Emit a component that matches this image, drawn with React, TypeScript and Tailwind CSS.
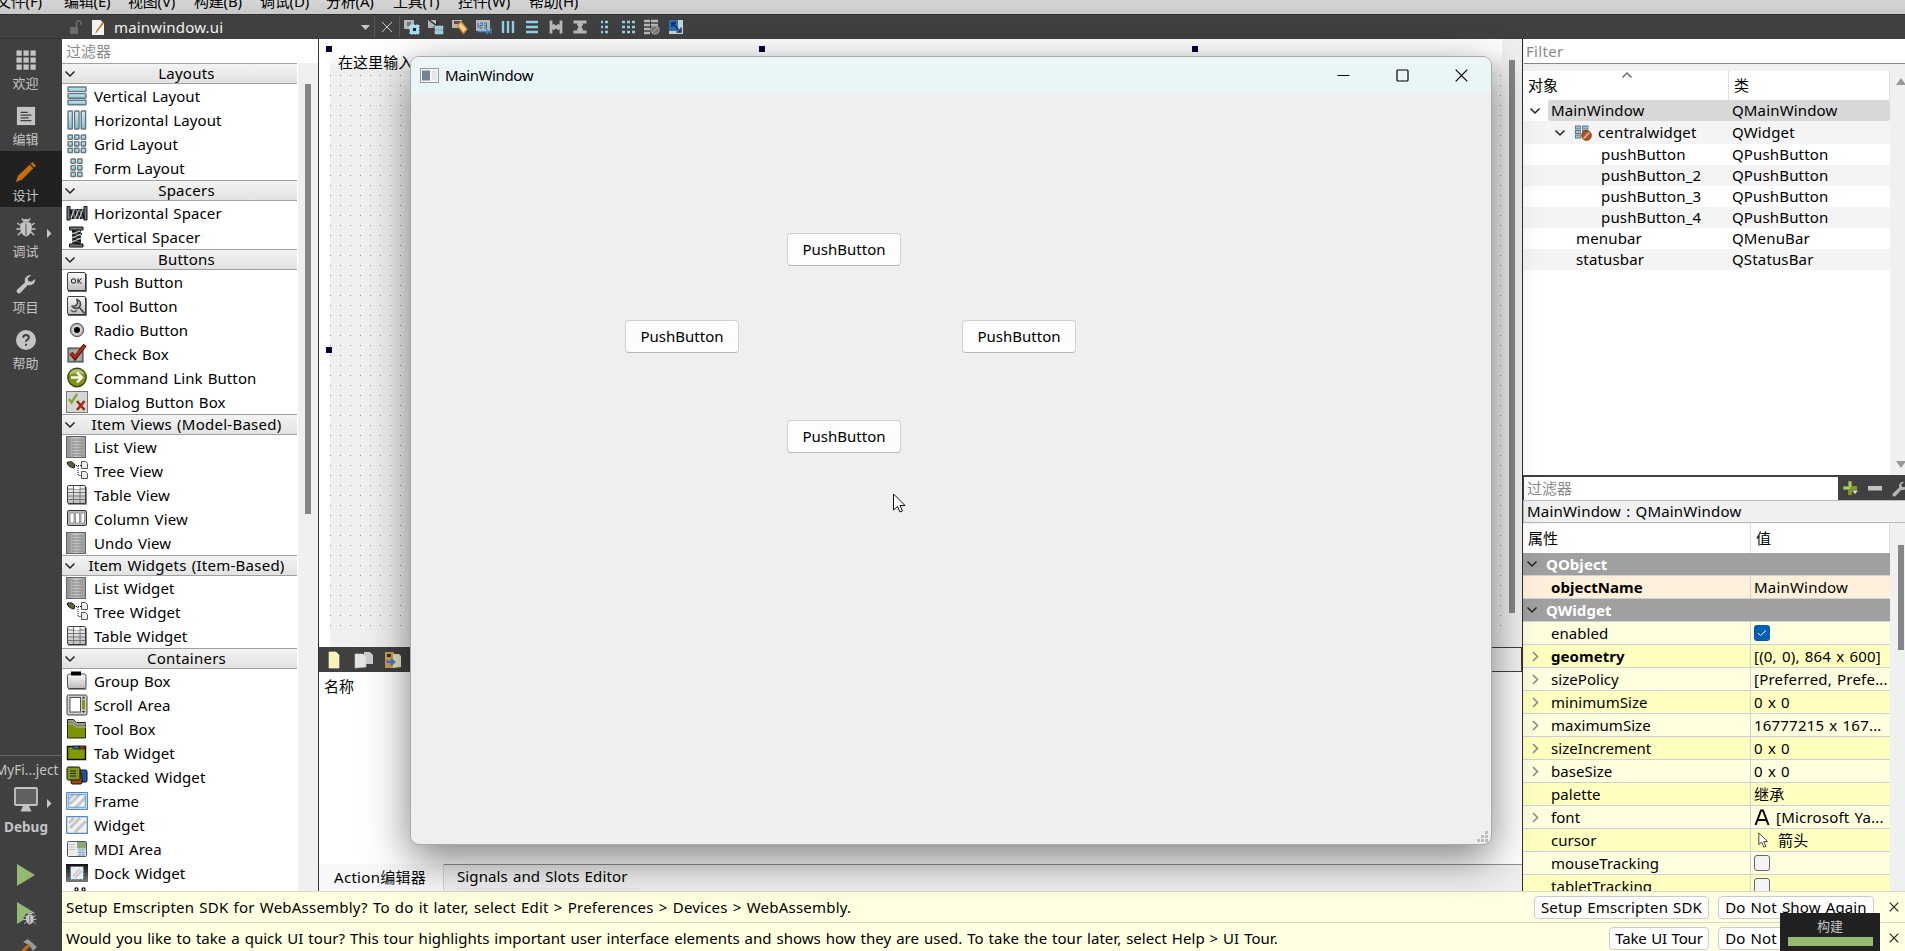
import React from "react";

type IconProps = { name: string };

const bars = (horizontal: boolean) => (
  <>
    {[0, 1, 2].map((i) =>
      horizontal ? (
        <rect key={i} x="2" y={2 + i * 6.6} width="18" height="4.6" rx=".6" fill="url(#aqua)" stroke="#6b757a" strokeWidth="1.4" />
      ) : (
        <rect key={i} x={2 + i * 6.6} y="2" width="4.4" height="18" rx=".6" fill="url(#aqua)" stroke="#6b757a" strokeWidth="1.4" />
      ),
    )}
  </>
);

const cells = (cols: number, off: number) =>
  Array.from({ length: cols * 3 }, (_, k) => {
    const c = k % cols;
    const r = Math.floor(k / cols);
    return (
      <rect key={k} x={off + c * 6.6} y={2 + r * 6.6} width="4.4" height="4.4" rx=".6" fill="url(#aqua)" stroke="#6b757a" strokeWidth="1.4" />
    );
  });

const frameBox = <rect x="1.5" y="1.5" width="18" height="18" rx="1.5" fill="url(#silver)" stroke="#444" />;

const stripes = <path d="M4 14 L14 4 M9 18 L20 7 M3 9 L8 4" stroke="#c6c6c6" strokeWidth="3" />;

const boxIcons: Record<string, React.ReactNode> = {
  vlayout: bars(true),
  hlayout: bars(false),
  grid: cells(3, 2),
  form: cells(2, 5),
  hspacer: (
    <>
      <rect x="4" y="7" width="14" height="10" fill="#555c60" />
      <path d="M1 4.500h3v13.500H1zM18 4.500h3v13.500h-3z" fill="#777" stroke="#111" />
      <path d="M4.500 8l2.500 9M8 7l3.500 10M11.500 7L15 17M15 7l3 9" stroke="#111" strokeWidth="1.600" />
      <path d="M5 16L8.500 7M9 17l3.500-9M13 17l3.500-9" stroke="#c8d0d4" strokeWidth="1.200" />
    </>
  ),
  vspacer: (
    <>
      <rect x="6" y="4" width="9" height="14" fill="#555c60" />
      <path d="M3.500 1h13.500v3H3.500zM3.500 18h13.500v3H3.500z" fill="#777" stroke="#111" />
      <path d="M6 5l10 3M6 8.500l9 3.500M6 12l9 3.500M6 15.500l8 2.500" stroke="#111" strokeWidth="1.600" />
      <path d="M6 8l8-3M6 12l9-4M6 16l9-4" stroke="#c8d0d4" strokeWidth="1.100" />
    </>
  ),
  push: (
    <>
      {frameBox}
      <path d="M2 20h18V3" stroke="#333" strokeWidth="1.4" fill="none" />
      <rect x="5.5" y="8" width="4" height="4" rx="1.2" fill="none" stroke="#111" />
      <path d="M12 7.5v5M15.5 7.5L12.5 10l3 2.5" stroke="#111" fill="none" />
    </>
  ),
  tool: (
    <>
      {frameBox}
      <path d="M2 20h18V3" stroke="#333" strokeWidth="1.4" fill="none" />
      <path d="M11 4.5a4.5 4.5 0 1 1-4.8 6.8l3.6-.5 1.8-2.3zM13 12l5.5 6.5" stroke="#444" strokeWidth="1.6" fill="#c8c8c8" />
      <path d="M5 15a3.5 3.5 0 0 0 6 0" stroke="#555" fill="none" strokeWidth="1.4" />
    </>
  ),
  radio: (
    <>
      <circle cx="11" cy="11" r="6.7" fill="#a9a9a9" stroke="#555" />
      <circle cx="11" cy="11" r="5" fill="#d4d4d4" />
      <circle cx="11" cy="11" r="3" fill="#000" />
    </>
  ),
  check: (
    <>
      <rect x="2" y="5" width="15" height="14" fill="#999" stroke="#333" />
      <rect x="4" y="7" width="11" height="10" fill="#aaa" />
      <path d="M5 10l4 5L19 2" stroke="#641204" strokeWidth="4" fill="none" />
      <path d="M5 10l4 4L18.5 3" stroke="#b03318" strokeWidth="2" fill="none" />
    </>
  ),
  command: (
    <>
      <circle cx="11" cy="10.5" r="9.2" fill="#7f9414" stroke="#3c450a" strokeWidth="1.400" />
      <path d="M3 8a8.4 8.4 0 0 1 16 0q-8-4-16 0" fill="#b2c170" />
      <path d="M5 10.5h10M11 5.5l5 5-5 5" stroke="#fff" strokeWidth="2.4" fill="none" />
    </>
  ),
  dialog: (
    <>
      <rect x=".5" y=".5" width="21" height="21" fill="#d6d6d6" stroke="#777" />
      <path d="M3 8l2.5 3.5L11 3" stroke="#7fae2a" strokeWidth="2.4" fill="none" />
      <path d="M11 10l7.5 9M18.5 10L11 19" stroke="#9b2d10" strokeWidth="2.6" />
    </>
  ),
  list: (
    <>
      <rect x=".5" y=".5" width="19" height="21" fill="url(#steel)" stroke="#666" />
      {[4, 7, 10, 13, 16, 19].map((y) => (
        <path key={y} d={`M3 ${y}h1.5M6 ${y}h11`} stroke="#848484" />
      ))}
    </>
  ),
  tree: (
    <>
      <path d="M1 2.500q5-2.500 8 2.500l-1 3Q2 7 1 2.500z" fill="#55663a" stroke="#1a1a1a" />
      <path d="M10 5.500h5M12 6v9.500h3" stroke="#111" strokeDasharray="1 1" fill="none" />
      <path d="M15.500 1.500h4l2 2v5h-6zM15.500 11.500h4l2 2v5h-6z" fill="#eee" stroke="#555" />
    </>
  ),
  table: (
    <>
      {frameBox}
      <path d="M2 20h18V3" stroke="#333" strokeWidth="1.2" fill="none" />
      <path d="M2 5h17M7.500 2v17M14 2v17M2 8.500h17M2 12h17M2 15.500h17" stroke="#6f7678" strokeWidth="1" />
      <rect x="8.500" y="2.500" width="5" height="2.500" fill="#fff" />
    </>
  ),
  column: (
    <>
      <rect x="1.500" y="2.500" width="19" height="15" rx="1.500" fill="#bbb" stroke="#333" />
      <path d="M4 5h4v10H4zM9.500 5h4v10h-4zM15 5h3.500v10H15z" fill="#fff" stroke="#666" strokeWidth=".6" />
    </>
  ),
  group: (
    <>
      <rect x="1.500" y="4" width="18.500" height="14.500" rx="2" fill="url(#silver)" stroke="#555" />
      <path d="M2 19h18.500" stroke="#333" />
      <rect x="5" y="1.500" width="10" height="4" fill="#000" />
    </>
  ),
  scroll: (
    <>
      <rect x="1" y="1" width="20" height="20" rx="1.500" fill="#ccc" stroke="#444" />
      <rect x="4" y="3.500" width="10.500" height="14.500" fill="#fff" stroke="#555" />
      <rect x="16" y="6" width="3" height="9.500" fill="#86960f" />
      <path d="M16 4.500l1.500-2 1.500 2zM16 17l1.500 2 1.500-2z" fill="#111" />
    </>
  ),
  toolbox: (
    <>
      <path d="M1.500 1.500h6l3 3h9V20h-18z" fill="#7c9400" stroke="#222" />
      <path d="M2 3h5l4 3h8.500M2 6h5l4 3h8.500" stroke="#999" strokeWidth="1.800" fill="none" />
    </>
  ),
  tab: (
    <>
      <path d="M1.500 4.500h18v13h-18z" fill="#7f9b00" stroke="#111" strokeWidth="1.500" />
      <rect x="7" y="4" width="6" height="3" fill="#2c68b0" stroke="#111" strokeWidth=".6" />
      <rect x="13.500" y="4" width="5.500" height="3" fill="#9c3410" stroke="#111" strokeWidth=".6" />
    </>
  ),
  stacked: (
    <>
      <rect x="10" y="4" width="11" height="12" rx="1.500" fill="#1d57a0" stroke="#111" />
      <rect x="5" y="7" width="11" height="11" rx="1.500" fill="#a0480f" stroke="#111" />
      <rect x="1" y="1" width="13" height="13" rx="1.500" fill="#84961a" stroke="#111" />
      <path d="M4 5h6M4 7.500h6M4 10h6" stroke="#222" />
    </>
  ),
  frame: (
    <>
      <rect x=".7" y="2.700" width="20.600" height="16.600" fill="#f2f2f2" stroke="#2c6fae" />
      {stripes}
      <rect x="2.700" y="4.700" width="16.600" height="12.600" fill="none" stroke="#5ba0d8" strokeWidth="1" />
    </>
  ),
  widget: (
    <>
      <rect x=".7" y="2.700" width="20.600" height="16.600" fill="#f0f0f0" />
      {stripes}
      <rect x=".7" y="2.700" width="20.600" height="16.600" fill="none" stroke="#2c6fae" />
    </>
  ),
  mdi: (
    <>
      <rect x="1.500" y="3.500" width="19" height="15" rx="1" fill="#eee" stroke="#555" />
      <rect x="11" y="4" width="9" height="6.500" fill="#88a878" />
      <path d="M3 6.500h6M3 9h6M3 11.500h6" stroke="#bbb" />
      <path d="M11.500 12h8M11.500 14.500h8M11.500 17h8M14 11.500v6.500M17 11.500v6.500" stroke="#7aa9d0" />
    </>
  ),
  dock: (
    <>
      <rect x="0" y="2" width="22" height="18" fill="url(#dark)" />
      <rect x="4.500" y="4.500" width="13" height="13" fill="#eee" stroke="#3474b0" strokeDasharray="2 1.500" />
      <path d="M7 14l7-7M9 16l7-7" stroke="#ccc" strokeWidth="2" />
    </>
  ),
  glasses: (
    <path d="M9 3.500a1.500 1.700 0 1 0 3 0 1.500 1.700 0 1 0-3 0M16 3.500a1.500 1.700 0 1 0 3 0 1.500 1.700 0 1 0-3 0" fill="none" stroke="#111" strokeWidth="1.300" />
  ),
};

function BoxIcon({ name }: IconProps) {
  return (
    <svg width="22" height="22" viewBox="0 0 22 22" className="shrink-0">
      {boxIcons[name]}
    </svg>
  );
}

const C = "#8fd3e8";
const G = "#b9b9b9";
const toolIcons: React.ReactNode[] = [
  <><rect x="0" y="1" width="10" height="9" fill={G} /><rect x="3" y="3" width="4" height="4" fill="#777" /><rect x="6" y="6" width="9" height="9" fill="#9fe0f0" stroke="#cdeef6" strokeWidth=".8" strokeDasharray="2 1" /><rect x="9" y="9" width="3" height="3" fill="#223" /></>,
  <><rect x="0" y="1" width="8" height="8" fill={G} /><path d="M1 1l8 6M9 3v5H5" stroke="#222" strokeWidth="1.200" fill="none" /><path d="M7 7h8v3.500H7zM7 11.500h8V15H7z" fill={C} stroke="#ddd" strokeWidth=".5" /></>,
  <><rect x="0" y="1" width="10" height="8" fill={G} /><path d="M2 2h7v3H2z" fill="#555" /><path d="M5.500 6.500l3.500-3.500 6 7-3.500 4.500z" fill="#f3d3a8" stroke="#e08a1e" strokeWidth="1.300" /></>,
  <><rect x="0" y="1" width="14" height="11" fill={G} /><path d="M2 4v5M4 4h2.500v2.500H4V9h2.500M8 4h2.500v5H8M8 6.500h2.500" stroke="#2a6eb5" fill="none" /><path d="M2 12.500h10M10 10l3 2.500-3 2.500M15 9v6" stroke="#3f8ed8" strokeWidth="1.300" fill="none" /></>,
  <path d="M3 2v12M8 2v12M13 2v12" stroke={C} strokeWidth="2.400" />,
  <path d="M2 3h12M2 8h12M2 13h12" stroke={C} strokeWidth="2.400" />,
  <path d="M3 1.500v13M13 1.500v13M5 8h6M6.500 5.500L5 8l1.500 2.500M9.500 5.500L11 8l-1.500 2.500" stroke={G} strokeWidth="2.800" fill="none" />,
  <path d="M1.500 3h13M1.500 13h13M8 5v6M5.500 6.500L8 5l2.500 1.500M5.500 9.500L8 11l2.500-1.500" stroke={G} strokeWidth="2.800" fill="none" />,
  <path d="M5 3h2M9 3h3M5 8h2M9 8h3M5 13h2M9 13h3" stroke={C} strokeWidth="2.600" />,
  <path d="M2 3h3M7 3h3M12 3h3M2 8h3M7 8h3M12 8h3M2 13h3M7 13h3M12 13h3" stroke={C} strokeWidth="2.600" />,
  <><path d="M0 2h6M7 2h7M0 6h6M7 6h7M0 10h6M0 14h6" stroke={G} strokeWidth="2.600" /><circle cx="11" cy="11" r="4.200" fill="#777" stroke="#aaa" /><path d="M8 14l6-6" stroke="#bbb" /></>,
  <><rect x="1" y="1" width="14" height="14" fill="#c9d3dc" /><rect x="1" y="1" width="9" height="11" fill="#2a6fb8" /><path d="M4 8V4h4M4 4l8 8M13 8.500V13H8.500" stroke="#0e2e57" strokeWidth="1.400" fill="none" /></>,
];

type Section = { title: string; items: [string, string][] };
const sections: Section[] = [
  { title: "Layouts", items: [["vlayout", "Vertical Layout"], ["hlayout", "Horizontal Layout"], ["grid", "Grid Layout"], ["form", "Form Layout"]] },
  { title: "Spacers", items: [["hspacer", "Horizontal Spacer"], ["vspacer", "Vertical Spacer"]] },
  {
    title: "Buttons",
    items: [["push", "Push Button"], ["tool", "Tool Button"], ["radio", "Radio Button"], ["check", "Check Box"], ["command", "Command Link Button"], ["dialog", "Dialog Button Box"]],
  },
  {
    title: "Item Views (Model-Based)",
    items: [["list", "List View"], ["tree", "Tree View"], ["table", "Table View"], ["column", "Column View"], ["list", "Undo View"]],
  },
  { title: "Item Widgets (Item-Based)", items: [["list", "List Widget"], ["tree", "Tree Widget"], ["table", "Table Widget"]] },
  {
    title: "Containers",
    items: [
      ["group", "Group Box"], ["scroll", "Scroll Area"], ["toolbox", "Tool Box"], ["tab", "Tab Widget"], ["stacked", "Stacked Widget"],
      ["frame", "Frame"], ["widget", "Widget"], ["mdi", "MDI Area"], ["dock", "Dock Widget"], ["glasses", ""],
    ],
  },
];

function Chevron({ className = "", color = "#222" }: { className?: string; color?: string }) {
  return (
    <svg width="12" height="8" viewBox="0 0 12 8" className={className}>
      <path d="M1.500 1.500L6 6l4.500-4.500" fill="none" stroke={color} strokeWidth="1.500" />
    </svg>
  );
}

function Arrow({ className = "" }: { className?: string }) {
  return (
    <svg width="5" height="9" viewBox="0 0 5 9" className={className}>
      <path d="M0 0l4.500 4.500L0 9z" fill="#c8c8c8" />
    </svg>
  );
}

const bug = (
  <>
    <path d="M7.500 4a3.500 3 0 0 1 7 0z" fill="#c4c4c4" />
    <path d="M5.500 5.500q5.500-2 11 0 1.500 4 .500 8.500-1 4.500-6 6.500-5-2-6-6.500-1-4.500.500-8.500z" fill="#c4c4c4" />
    <path d="M11 6v13" stroke="#404040" strokeWidth="1" />
    <path d="M5 8L1.500 5.500M17 8l3.500-2.500M5 12H.5M17 12h4.500M5.500 15.500L2 19M16.500 15.500L20 19M8.500 3L6.500.500M13.500 3l2-2.500" stroke="#c4c4c4" strokeWidth="1.600" />
  </>
);

const wrench = "M15.500 1a6 6 0 0 0-5.500 8L1.500 17a2.300 2.300 0 0 0 3.500 3.500L13 12a6 6 0 0 0 8-6.500l-4 3-3.500-.700-.700-3 4-3.300z";

const modes: { label: string; icon: React.ReactNode; active?: boolean; arrow?: boolean }[] = [
  {
    label: "欢迎",
    icon: [0, 1, 2].map((r) => [0, 1, 2].map((c) => <rect key={`${r}${c}`} x={0.5 + c * 7.700} y={0.5 + r * 7.700} width="5.800" height="5.800" fill="#c4c4c4" />)),
  },
  { label: "编辑", icon: <><rect x="1" y="1" width="20" height="20" fill="#c4c4c4" /><path d="M5 7h8M5 10h12M5 13h9M5 16h12" stroke="#404040" strokeWidth="1.300" /></> },
  { label: "设计", active: true, icon: <path d="M0 22l2-6.500L15 3l4 4L6.500 19.500zM16 2l2-2 4 4-2 2z" fill="#c86e0a" /> },
  { label: "调试", arrow: true, icon: bug },
  { label: "项目", icon: <path d={wrench} fill="#c4c4c4" /> },
  { label: "帮助", icon: <><circle cx="11" cy="11" r="11" fill="#c4c4c4" /><path d="M7.800 8.500q.2-3 3.200-3t3.200 2.700c0 2.300-3.200 2.300-3.200 4.800M11 15v2.300" stroke="#404040" strokeWidth="2.200" fill="none" /></> },
];

const menus = [
  ["文件(F)", "w-[68px]"], ["编辑(E)", "w-16"], ["视图(V)", "w-[66px]"], ["构建(B)", "w-[66px]"], ["调试(D)", "w-[66px]"],
  ["分析(A)", "w-[67px]"], ["工具(T)", "w-[65px]"], ["控件(W)", "w-[71px]"], ["帮助(H)", "w-[70px]"],
];

const objects = [
  ["MainWindow", "QMainWindow"], ["centralwidget", "QWidget"], ["pushButton", "QPushButton"], ["pushButton_2", "QPushButton"],
  ["pushButton_3", "QPushButton"], ["pushButton_4", "QPushButton"], ["menubar", "QMenuBar"], ["statusbar", "QStatusBar"],
];
const objectIndent = ["pl-7", "pl-[75px]", "pl-[78px]", "pl-[78px]", "pl-[78px]", "pl-[78px]", "pl-[53px]", "pl-[53px]"];

type Prop = { name: string; value?: React.ReactNode; kind?: "group" | "peach"; bold?: boolean; open?: boolean; dark?: boolean };

const emptyBox = <span className="block size-4 rounded-[3px] border border-[#666] bg-[#f4f4f4]" />;

const props: Prop[] = [
  { name: "QObject", kind: "group" },
  { name: "objectName", value: "MainWindow", kind: "peach", bold: true },
  { name: "QWidget", kind: "group" },
  {
    name: "enabled",
    value: (
      <span className="flex size-4 items-center justify-center rounded-[3px] bg-[#005fb0]">
        <svg width="10" height="8" viewBox="0 0 10 8"><path d="M1 4l2.500 2.500L9 1.500" stroke="#fff" fill="none" /></svg>
      </span>
    ),
  },
  { name: "geometry", value: "[(0, 0), 864 x 600]", bold: true, open: true, dark: true },
  { name: "sizePolicy", value: "[Preferred, Prefe...", open: true },
  { name: "minimumSize", value: "0 x 0", open: true, dark: true },
  { name: "maximumSize", value: "16777215 x 167...", open: true },
  { name: "sizeIncrement", value: "0 x 0", open: true, dark: true },
  { name: "baseSize", value: "0 x 0", open: true },
  { name: "palette", value: "继承", dark: true },
  {
    name: "font", open: true,
    value: <><svg width="16" height="17" viewBox="0 0 16 17" className="mr-[6px]"><path d="M1.500 16L7 1.500h2L14.500 16M4 11h8" stroke="#000" strokeWidth="2" fill="none" /></svg>[Microsoft Ya...</>,
  },
  {
    name: "cursor", dark: true,
    value: <><svg width="10" height="16" viewBox="0 0 12 19" className="mr-2.5 ml-1"><path d="M1 1v14l3.500-3 2.500 6 2.500-1L7 11.500h4.500z" fill="#fff" stroke="#222" /></svg>箭头</>,
  },
  { name: "mouseTracking", value: emptyBox },
  { name: "tabletTracking", value: emptyBox, dark: true },
];

function PropRow({ p }: { p: Prop }) {
  if (p.kind === "group") {
    return (
      <div className="flex h-[23px] items-center border-b border-[#d0d0d8] bg-[#a0a0a0] pl-[3px] font-bold text-white">
        <Chevron className="mr-2" />
        {p.name}
      </div>
    );
  }
  const bg = p.kind === "peach" ? "bg-[#fff0dc]" : p.dark ? "bg-[#ffffbf]" : "bg-[#ffffdf]";
  return (
    <div className={`flex h-[23px] border-b border-[#d0d0d8] ${bg}`}>
      <div className="flex w-[228px] items-center border-r border-[#d0d0d8]">
        <span className="flex w-7 pl-[9px]">
          {p.open && (
            <svg width="7" height="11" viewBox="0 0 7 11"><path d="M1 1l4.500 4.500L1 10" fill="none" stroke="#888" strokeWidth="1.500" /></svg>
          )}
        </span>
        <span className={p.bold ? "font-bold" : ""}>{p.name}</span>
      </div>
      <div className="flex min-w-0 flex-1 items-center pl-[3px] tracking-[0.2px] whitespace-nowrap">{p.value}</div>
    </div>
  );
}

function MenuBar() {
  return (
    <div className="h-3.5 shrink-0 overflow-hidden bg-linear-to-b from-[#d6d6d6] to-[#c8c8c8]">
      <div className="-mt-[11px] -ml-1 flex h-6 items-center tracking-[-0.2px]">
        {menus.map(([m, w]) => <span key={m} className={`${w} shrink-0`}>{m}</span>)}
      </div>
    </div>
  );
}

function EditorBar() {
  return (
    <div className="flex h-[25px] shrink-0 items-center border-t border-[#2e2e2e] bg-[#404040]">
      <div className="h-full w-[61px] border-b border-[#333]" />
      <svg width="14" height="16" viewBox="0 0 14 16" className="ml-2">
        <rect x="1" y="8" width="8" height="7" fill="#6b6b6b" />
        <path d="M7.500 8V4a2 2 0 0 1 4.500 0v2" stroke="#6b6b6b" strokeWidth="1.500" fill="none" />
      </svg>
      <svg width="15" height="17" viewBox="0 0 15 17" className="ml-2">
        <path d="M1 1h8.500L13 4.500V16H1z" fill="#f2f2f2" />
        <path d="M13 4L6 13l-1.500 2 .500-3L11.500 3z" fill="#c9741a" />
      </svg>
      <span className="ml-2 w-[247px] tracking-[0.18px] text-[#f0f0f0]">mainwindow.ui</span>
      <svg width="9" height="5" viewBox="0 0 9 5"><path d="M0 0h9L4.500 5z" fill="#c8c8c8" /></svg>
      <div className="ml-1 h-5 w-px bg-[#5c5c5c]" />
      <svg width="12" height="12" viewBox="0 0 12 12" className="ml-1.5"><path d="M1 1l10 10M11 1L1 11" stroke="#ccc" /></svg>
      <div className="ml-1.5 h-5 w-px bg-[#5c5c5c]" />
      <div className="ml-1 flex gap-2">
        {toolIcons.map((ic, i) => <svg key={i} width="16" height="16" viewBox="0 0 16 16">{ic}</svg>)}
      </div>
    </div>
  );
}

function Sidebar() {
  return (
    <div className="flex w-[62px] shrink-0 flex-col overflow-hidden bg-[#404040] text-[#c4c4c4]">
      {modes.map((m) => (
        <div key={m.label} className={`relative flex h-14 w-full shrink-0 flex-col items-center pt-[11px] pr-[11px] text-[13px] ${m.active ? "bg-[#212121]" : ""}`}>
          <svg width="20" height="20" viewBox="0 0 22 22">{m.icon}</svg>
          <span className="mt-[3px] leading-5">{m.label}</span>
          {m.arrow && <Arrow className="absolute top-[22px] left-[47px]" />}
        </div>
      ))}
      <div className="mt-auto mb-0 flex h-[196px] shrink-0 flex-col border-t border-[#666]">
        <span className="mt-1 -ml-[5px] text-[13.5px] leading-5 whitespace-nowrap">MyFi...ject</span>
        <div className="mt-[7px] ml-3.5 flex items-end">
          <svg width="24" height="25" viewBox="0 0 24 25">
            <rect x="1" y="1" width="22" height="17" rx="1" fill="#606060" stroke="#c4c4c4" strokeWidth="1.800" />
            <path d="M9 19h6l2.500 5.500h-11z" fill="#c4c4c4" />
          </svg>
          <Arrow className="mb-1 ml-[9px]" />
        </div>
        <span className="mt-[5px] ml-1 text-[13.5px] leading-5 font-bold">Debug</span>
        <svg width="18" height="22" viewBox="0 0 18 22" className="mt-[27px] ml-[17px] shrink-0"><path d="M0 0l18 11L0 22z" fill="#93ba70" /></svg>
        <svg width="22" height="26" viewBox="0 0 22 26" className="mt-4 ml-[17px] shrink-0">
          <path d="M0 0l18 11L0 22z" fill="#93ba70" />
          <g transform="translate(6 10) scale(.62)"><circle cx="11" cy="11" r="10" fill="#404040" />{bug}</g>
        </svg>
        <svg width="22" height="20" viewBox="0 0 22 20" className="mt-[11px] ml-[17px] shrink-0">
          <path d="M6 3l5-3 9 8-4 4-4-6z" fill="#9a9a9a" />
          <path d="M12 6L1 17" stroke="#c86e0a" strokeWidth="3" />
        </svg>
      </div>
    </div>
  );
}

function WidgetBox() {
  return (
    <div className="flex w-64 shrink-0 flex-col overflow-hidden bg-white">
      <div className="flex h-6 shrink-0 items-center bg-white pl-1 text-[#8a8a8a]">过滤器</div>
      <div className="flex min-h-0 flex-1">
        <div className="w-[235px]">
          {sections.map((s) => (
            <div key={s.title}>
              <div className="flex h-[21px] items-center border-y border-[#a0a0a0] bg-linear-to-b from-[#f3f3f3] to-[#e2e2e2] pl-0.5">
                <Chevron />
                <span className="flex-1 text-center leading-none tracking-[0.25px] whitespace-nowrap">{s.title}</span>
              </div>
              {s.items.map(([icon, label], i) => (
                <div key={i} className="flex h-6 items-center gap-1.5 pl-1 tracking-[0.1px] text-black">
                  <BoxIcon name={icon} />
                  <span className="leading-6">{label}</span>
                </div>
              ))}
            </div>
          ))}
        </div>
        <div className="ml-px flex-1 bg-[#f0f0f0] pt-[21px] pl-[7px]">
          <div className="h-[430px] w-1.5 bg-[#858585]" />
        </div>
      </div>
    </div>
  );
}

function PushButton({ className }: { className: string }) {
  return (
    <button className={`absolute flex h-[33px] w-[114px] items-center justify-center rounded-[4px] border border-[#d0d0d0] border-b-[#b8b8b8] bg-[#fdfdfd] tracking-[0px] ${className}`}>
      PushButton
    </button>
  );
}

function PreviewWindow() {
  return (
    <div className="absolute top-[56px] left-[410px] flex h-[789px] w-[1082px] flex-col overflow-hidden rounded-[9px] border border-[#a9a9a9] bg-[#efefef] shadow-[0_14px_44px_rgba(0,0,0,0.5)]">
      <div className="flex h-[37px] shrink-0 items-center bg-[#eaf5f8] pl-[9px]">
        <svg width="19" height="15" viewBox="0 0 19 15">
          <rect x=".5" y=".5" width="18" height="14" fill="#f4f4f4" stroke="#999" />
          <rect x="2" y="2.500" width="8" height="10" fill="#6f8494" />
          <rect x="12" y="2.500" width="4.500" height="10" fill="#e2e6ea" />
        </svg>
        <span className="ml-[6px] flex-1 tracking-[-0.4px]">MainWindow</span>
        <div className="mr-[23px] flex gap-[46px]">
          <svg width="13" height="13" viewBox="0 0 13 13"><path d="M.5 6.500h12" stroke="#000" /></svg>
          <svg width="13" height="13" viewBox="0 0 13 13"><rect x="1" y="1" width="11" height="11" rx="1" fill="none" stroke="#000" strokeWidth="1.200" /></svg>
          <svg width="13" height="13" viewBox="0 0 13 13"><path d="M.7.700l11.600 11.600M12.300.700L.700 12.300" stroke="#000" strokeWidth="1.200" /></svg>
        </div>
      </div>
      <div className="relative flex-1">
        <PushButton className="top-[139px] left-[376px]" />
        <PushButton className="top-[226px] left-[214px]" />
        <PushButton className="top-[226px] left-[551px]" />
        <PushButton className="top-[326px] left-[376px]" />
        <svg width="13" height="20" viewBox="0 0 13 20" className="absolute top-[399px] left-[482px]">
          <path d="M.5 1v16l4-3.500 2.500 5.500 2.500-1-2.500-5.500h5z" fill="#fff" stroke="#111" />
        </svg>
        <svg width="12" height="12" viewBox="0 0 12 12" className="absolute right-[2px] bottom-[2px]">
          <path d="M8 1h3v3H8zM4 5h3v3H4zM8 5h3v3H8zM0 9h3v3H0zM4 9h3v3H4zM8 9h3v3H8z" fill="#bdbdbd" />
        </svg>
      </div>
    </div>
  );
}

function Handle({ className }: { className: string }) {
  return <div className={`absolute size-1.5 border border-[#00007f] bg-black ${className}`} />;
}

function Workspace() {
  return (
    <div className="flex w-[1204px] shrink-0 flex-col border-l border-[#333] bg-[#f0f0f0]">
      <div className="flex h-[608px] shrink-0">
        <div className="relative w-[1183px] bg-white pt-3 pl-[11px]">
          <div className="flex h-full flex-col">
            <div className="flex h-[23px] items-center bg-linear-to-b from-white to-[#ececec] pl-2">在这里输入</div>
            <svg width="1172" height="574" className="block bg-[#f0f0f0]">
              <defs>
                <pattern id="dots" width="10" height="10" patternUnits="userSpaceOnUse"><rect y="1" width="1" height="1" fill="#8c8c8c" /></pattern>
              </defs>
              <rect width="1172" height="554" fill="url(#dots)" />
            </svg>
          </div>
          <Handle className="top-[7px] left-[7px]" />
          <Handle className="top-[7px] left-[440px]" />
          <Handle className="top-[7px] left-[873px]" />
          <Handle className="top-[308px] left-[7px]" />
        </div>
        <div className="flex-1 pt-[21px] pl-[7px]"><div className="h-[553px] w-1.5 bg-[#858585]" /></div>
      </div>
      <div className="flex h-[25px] shrink-0 items-center bg-[#404040] pl-[9px]">
        <svg width="12" height="18" viewBox="0 0 12 18"><path d="M1 1h7l3 3v13H1z" fill="#fdf0b0" stroke="#fff" strokeWidth=".6" /></svg>
        <svg width="20" height="18" viewBox="0 0 20 18" className="ml-3.5"><path d="M10 1h6l3 3v9h-9z" fill="#ccc" /><path d="M1 3h8l3 3v10L1 17z" fill="#e4e4e4" stroke="#ccc" strokeWidth=".6" /></svg>
        <svg width="18" height="18" viewBox="0 0 18 18" className="ml-2.5"><rect x="1" y="1" width="9" height="16" fill="#d09a4c" /><path d="M9 3h6l2 2v11l-8 1z" fill="#e8e4c0" /><path d="M2 9l5 1V7l5 4-5 4v-3H3z" fill="#2f7fd0" /><path d="M3 3h4v3H3z" fill="#333" /></svg>
        <div className="mr-px ml-auto h-[23px] w-12 bg-[#f4f4f4]" />
      </div>
      <div className="h-[192px] shrink-0 bg-white pt-1 pl-[5px]">名称</div>
      <div className="flex flex-1">
        <div className="flex w-[125px] items-center border-r border-[#d4d4d4] bg-[#f8f8f8] pl-[15px] tracking-[0.3px] whitespace-nowrap">Action编辑器</div>
        <div className="flex-1 border-t border-[#8f8f8f] pl-[13px]">
          <span className="inline-block h-6 w-[183px] border-b border-[#e4e4e4] leading-[23px] tracking-[0.12px] whitespace-nowrap">Signals and Slots Editor</span>
        </div>
      </div>
    </div>
  );
}

function RightPanel() {
  return (
    <div className="flex min-w-0 flex-1 flex-col overflow-hidden border-l border-[#2e2e2e] bg-[#f0f0f0]">
      <div className="ml-px flex h-[25px] shrink-0 items-center border-b border-[#888] bg-white pl-0.5 tracking-[0.3px] text-[#8a8a8a]">Filter</div>
      <div className="mt-[7px] flex h-[404px] shrink-0">
        <div className="w-[367px] bg-white">
          <div className="flex h-[29px]">
            <div className="relative flex w-[206px] items-center border-r border-[#ddd] pl-[5px]">
              对象
              <Chevron className="absolute top-0 left-[98px] rotate-180" color="#666" />
            </div>
            <div className="flex w-[161px] items-center border-r border-[#ddd] pl-[5px]">类</div>
          </div>
          {objects.map(([n, c], i) => (
            <div key={n} className={`relative flex items-center tracking-[0.15px] ${i === 1 ? "h-[23px]" : "h-[21px]"} ${i % 2 ? "bg-[#f4f4f4]" : "bg-white"}`}>
              {i === 0 && <div className="absolute inset-y-0 right-0 left-[25px] rounded-xs bg-[#d8d8d8]" />}
              {i === 0 && <Chevron className="absolute left-[6px]" />}
              {i === 1 && <Chevron className="absolute left-[31px]" />}
              {i === 1 && (
                <svg width="17" height="16" viewBox="0 0 17 16" className="absolute left-[52px]">
                  <path d="M0 2.500h6M7 2.500h6.500M0 7h6M7 7h6.500M0 11.500h6" stroke="#5f7480" strokeWidth="4" />
                  <path d="M1 2.500h4.500M8 2.500h5M1 7h4.500M8 7h5M1 11.500h4.500" stroke="#93c4d8" strokeWidth="2" />
                  <circle cx="11.500" cy="10.500" r="4.800" fill="#b5561c" stroke="#7a3510" />
                  <path d="M8.500 13.500l6-6" stroke="#ccc" strokeWidth="1.300" />
                </svg>
              )}
              <span className={`relative w-[209px] ${objectIndent[i]}`}>{n}</span>
              <span className="relative">{c}</span>
            </div>
          ))}
        </div>
        <div className="ml-px flex flex-1 flex-col justify-between pt-[7px] pb-[7px] pl-[5px]">
          <svg width="10" height="7" viewBox="0 0 10 7"><path d="M5 0l5 7H0z" fill="#999" /></svg>
          <svg width="10" height="7" viewBox="0 0 10 7"><path d="M5 7l5-7H0z" fill="#999" /></svg>
        </div>
      </div>
      <div className="flex h-[25px] shrink-0 bg-[#404040] pt-0.5 pl-px">
        <div className="flex w-[314px] shrink-0 items-center bg-white pl-[3px] text-[#8a8a8a]">过滤器</div>
        <div className="flex items-center gap-2.5 pl-[5px]">
          <svg width="15" height="15" viewBox="0 0 15 15" className="shrink-0"><path d="M7 0v14M0 7h14" stroke="#7a9c1c" strokeWidth="4" /><path d="M7 1v5M1 7h6" stroke="#a9c49a" strokeWidth="2" /><path d="M9 9.500h6l-3 3.500z" fill="#ddd" /></svg>
          <svg width="14" height="5" viewBox="0 0 14 5" className="shrink-0"><rect width="14" height="4.500" fill="#c4c4c4" /></svg>
          <svg width="16" height="16" viewBox="0 0 22 22" className="shrink-0"><path d={wrench} fill="#b4b4b4" /></svg>
        </div>
      </div>
      <div className="flex h-[23px] shrink-0 items-center border border-r-0 border-[#bbb] bg-[#f0f0f0] pl-[3px] tracking-[0.2px]">MainWindow : QMainWindow</div>
      <div className="flex min-h-0 flex-1 pt-px">
        <div className="w-[367px]">
          <div className="flex h-[29px] bg-white">
            <div className="flex w-[228px] items-center border-r border-[#ddd] pl-[5px]">属性</div>
            <div className="flex flex-1 items-center border-r border-[#ddd] pl-[5px]">值</div>
          </div>
          {props.map((p) => <PropRow key={p.name} p={p} />)}
        </div>
        <div className="flex-1 pt-[21px] pl-2"><div className="h-[105px] w-1.5 bg-[#858585]" /></div>
      </div>
    </div>
  );
}

function InfoButton({ children, className }: { children: React.ReactNode; className: string }) {
  return (
    <div className={`flex h-[23px] shrink-0 items-center justify-center rounded-[4px] border border-[#ccc] bg-[#fdfdfd] whitespace-nowrap ${className}`}>{children}</div>
  );
}

function CloseX() {
  return <svg width="10" height="10" viewBox="0 0 10 10" className="mr-[6px] ml-[15px] shrink-0"><path d="M.7.700l8.600 8.600M9.300.700L.700 9.300" stroke="#222" strokeWidth="1.200" /></svg>;
}

function InfoBars() {
  return (
    <div className="flex h-[60px] shrink-0 flex-col overflow-hidden whitespace-nowrap">
      <div className="flex h-[31px] shrink-0 items-center border-t border-[#d8d8c8] bg-[#ffffe1] pl-1">
        <span className="flex-1 tracking-[0.22px]">Setup Emscripten SDK for WebAssembly? To do it later, select Edit &gt; Preferences &gt; Devices &gt; WebAssembly.</span>
        <InfoButton className="w-[175px] tracking-[0.15px]">Setup Emscripten SDK</InfoButton>
        <InfoButton className="ml-[9px] w-[156px] tracking-[0.15px]">Do Not Show Again</InfoButton>
        <CloseX />
      </div>
      <div className="flex h-[31px] shrink-0 items-center border-t border-[#d8d8c8] bg-[#ffffe1] pl-1">
        <span className="flex-1 tracking-[0.03px]">Would you like to take a quick UI tour? This tour highlights important user interface elements and shows how they are used. To take the tour later, select Help &gt; UI Tour.</span>
        <InfoButton className="w-[100px] tracking-[-0.2px]">Take UI Tour</InfoButton>
        <InfoButton className="ml-[9px] w-[156px] tracking-[0.15px]">Do Not Show Again</InfoButton>
        <CloseX />
      </div>
    </div>
  );
}

export default function App() {
  return (
    <div className="relative flex h-[951px] w-[1905px] flex-col overflow-hidden bg-[#f0f0f0] font-['Noto_Sans','Noto_Sans_CJK_SC',sans-serif] text-[15px] leading-[21px] tracking-[0.05px] text-black [word-spacing:1px]">
      <svg width="0" height="0" className="absolute">
        <defs>
          <linearGradient id="aqua" x2="0" y2="1"><stop stopColor="#cdf0fb" /><stop offset="1" stopColor="#7fc0d6" /></linearGradient>
          <linearGradient id="silver" x2="0" y2="1"><stop stopColor="#fafafa" /><stop offset="1" stopColor="#bcbcbc" /></linearGradient>
          <linearGradient id="steel"><stop stopColor="#8e8e8e" /><stop offset=".5" stopColor="#c8c8c8" /><stop offset="1" stopColor="#9a9a9a" /></linearGradient>
          <linearGradient id="dark" x2="0" y2="1"><stop stopColor="#111" /><stop offset="1" stopColor="#777" /></linearGradient>
        </defs>
      </svg>
      <MenuBar />
      <EditorBar />
      <div className="flex min-h-0 flex-1">
        <Sidebar />
        <div className="flex min-w-0 flex-1 flex-col">
          <div className="flex min-h-0 flex-1 overflow-hidden">
            <WidgetBox />
            <Workspace />
            <RightPanel />
          </div>
          <InfoBars />
        </div>
      </div>
      <PreviewWindow />
      <div className="absolute right-[25px] bottom-0 flex h-[38px] w-[100px] flex-col items-center bg-[#212121] pt-1 text-[13px] text-[#c4c4c4]">
        <span className="leading-[18px]">构建</span>
        <div className="mt-0.5 h-[9px] w-[85px] bg-[#93ba70]" />
      </div>
    </div>
  );
}
